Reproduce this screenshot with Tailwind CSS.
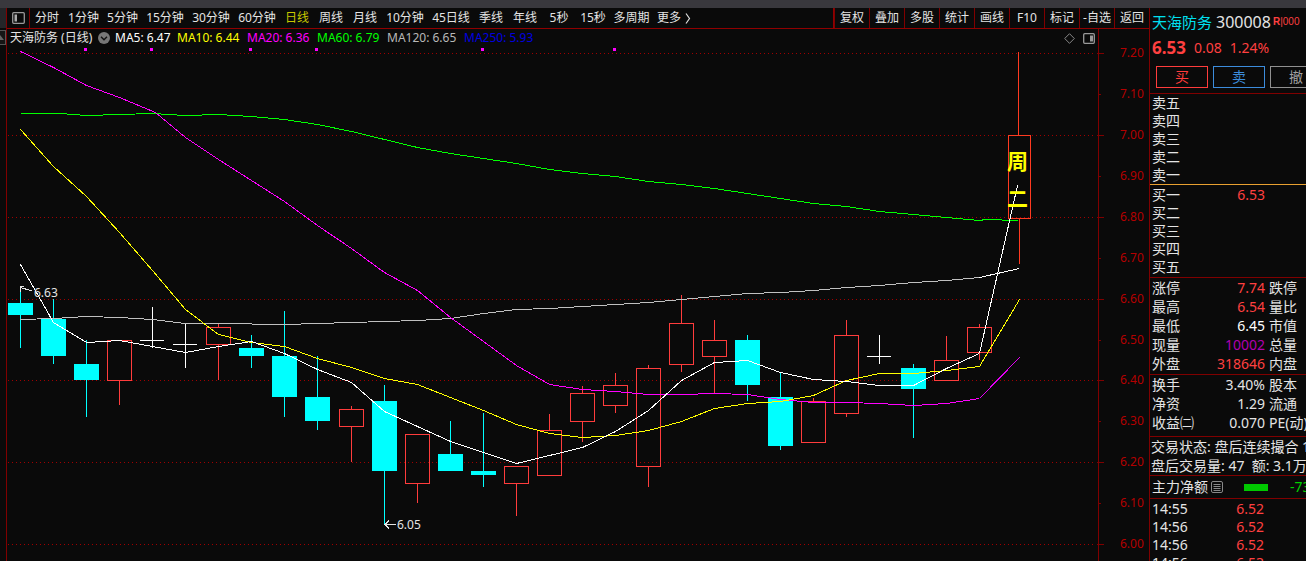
<!DOCTYPE html>
<html lang="zh-CN">
<head>
<meta charset="utf-8">
<title>天海防务 300008</title>
<script src="https://cdn.jsdelivr.net/npm/@tailwindcss/browser@4"></script>
</head>
<body class="flex h-screen flex-col overflow-hidden bg-[#0a0a0a] font-['Noto_Sans','Noto_Sans_CJK_SC',sans-serif] text-xs text-[#e4e4e4]">
<div class="h-2 shrink-0 bg-[#39383d]"></div>
<div class="flex min-h-0 flex-1">

  <!-- collapsed side drawer -->
  <div class="flex w-[6px] shrink-0 flex-col">
    <div class="h-5 bg-[#242528]"></div>
    <button aria-label="展开" class="mt-0.5 flex h-[15px] w-[6px] items-center border-y border-r border-[#555] bg-[#151515]">
      <svg class="h-1.5 w-1" viewBox="0 0 4 6" fill="#666"><path d="M0 0L4 5H0z"/></svg>
    </button>
  </div>

  <main class="flex min-w-0 flex-1 flex-col border-l border-[#800000]">
    <nav class="flex h-[21px] shrink-0 items-stretch border-b border-[#900000] whitespace-nowrap">
      <button aria-label="侧栏" class="flex w-[23px] items-center justify-center border-r border-[#800000]">
        <svg width="13" height="12" viewBox="0 0 13 12"><rect x=".7" y=".7" width="11.6" height="10.6" rx="1" fill="none" stroke="#999" stroke-width="1.3"/><path d="M2.5 2.5H5V9.5H2.5z" fill="#aaa"/></svg>
      </button>
      <button class="w-[34px]">分时</button>
      <button class="w-[39px]">1分钟</button>
      <button class="w-[39px]">5分钟</button>
      <button class="w-[46px]">15分钟</button>
      <button class="w-[46px]">30分钟</button>
      <button class="w-[46px]">60分钟</button>
      <button class="w-[34px] text-[#c8c800]">日线</button>
      <button class="w-[34px]">周线</button>
      <button class="w-[34px]">月线</button>
      <button class="w-[46px]">10分钟</button>
      <button class="w-[46px]">45日线</button>
      <button class="w-[34px]">季线</button>
      <button class="w-[34px]">年线</button>
      <button class="w-[34px]">5秒</button>
      <button class="w-[34px]">15秒</button>
      <button class="w-[43px]">多周期</button>
      <button class="flex items-center gap-1 pl-1">更多
        <svg width="6" height="11" viewBox="0 0 6 11" fill="none" stroke="#ddd" stroke-width="1.2"><path d="M1 .5L4.5 5.5L1 10.5"/></svg>
      </button>
      <div class="ml-auto flex border-l border-[#900000]">
        <button class="w-[35px] border-l border-[#800000]">复权</button>
        <button class="w-[35px] border-l border-[#800000]">叠加</button>
        <button class="w-[35px] border-l border-[#800000]">多股</button>
        <button class="w-[35px] border-l border-[#800000]">统计</button>
        <button class="w-[35px] border-l border-[#800000]">画线</button>
        <button class="w-[35px] border-l border-[#800000]">F10</button>
        <button class="w-[35px] border-l border-[#800000]">标记</button>
        <button class="w-[35px] border-l border-[#800000]">-自选</button>
        <button class="w-[35px] border-l border-[#800000]">返回</button>
      </div>
    </nav>

    <div class="flex h-[18px] shrink-0 whitespace-nowrap">
      <div class="flex flex-1 items-center border-r border-[#800000] pr-[3px] pl-[3px]">
        <span class="w-[88px]">天海防务 (日线)</span>
        <button aria-label="指标菜单" class="w-[17px]">
          <svg width="12" height="12" viewBox="0 0 12 12"><circle cx="6" cy="6" r="6" fill="#777"/><path d="M3 4.8L6 7.8L9 4.8" fill="none" stroke="#111" stroke-width="1.4"/></svg>
        </button>
        <span class="w-[62px] text-white">MA5: 6.47</span>
        <span class="w-[70px] text-[#ffff00]">MA10: 6.44</span>
        <span class="w-[70px] text-[#ff00ff]">MA20: 6.36</span>
        <span class="w-[70px] text-[#00ff00]">MA60: 6.79</span>
        <span class="w-[77px] text-[#b8b8b8]">MA120: 6.65</span>
        <span class="text-[#0000e0]">MA250: 5.93</span>
        <span class="ml-auto flex items-center gap-2">
          <svg width="11" height="11" viewBox="0 0 11 11" fill="none" stroke="#888"><path d="M5.5 .7L10.3 5.5L5.5 10.3L.7 5.5z"/></svg>
          <svg width="12" height="11" viewBox="0 0 12 11"><rect x=".7" y=".7" width="10.6" height="9.6" rx="1" fill="none" stroke="#999" stroke-width="1.3"/><path d="M7 2.5H10V8.5H7z" fill="#999"/></svg>
        </span>
      </div>
      <div class="w-[50px]"></div>
    </div>

    <div class="min-h-0 flex-1">
      <svg id="chart" class="block h-full w-full overflow-visible" viewBox="7 47 1142 514" preserveAspectRatio="xMinYMin meet" role="img" aria-label="日K线图"></svg>
    </div>
  </main>

  <aside class="w-[157px] shrink-0 overflow-hidden border-l border-[#800000] text-sm leading-[18px] whitespace-nowrap">
    <header class="border-b border-[#800000] pb-[5px]">
      <div class="flex h-[27px] items-center pl-0.5">
        <h1 class="mr-1 text-[15px] text-[#00e0f0]">天海防务</h1>
        <span class="text-base">300008</span>
        <span class="ml-0.5 font-['Liberation_Sans',sans-serif] text-[10px] text-[#ff4040]"><b>R</b>|000</span>
      </div>
      <div class="flex h-[25px] items-center gap-2 pl-0.5 text-[#ff4040]">
        <b class="text-[17px]">6.53</b><span>0.08</span><span>1.24%</span>
      </div>
      <div class="mt-1.5 flex gap-[5px] pl-1.5">
        <button class="h-[22px] w-[52px] shrink-0 border border-[#ff3c3c] text-[#ff3c3c]">买</button>
        <button class="h-[22px] w-[52px] shrink-0 border border-[#3c8cdc] text-[#3c8cdc]">卖</button>
        <button class="h-[22px] w-[52px] shrink-0 border border-[#909090] text-[#a0a0a0]">撤</button>
      </div>
    </header>

    <table class="block border-b border-[#e8a030]"><tbody>
      <tr class="h-[18px]"><th class="p-0 pl-0.5 font-normal">卖五</th></tr>
      <tr class="h-[18px]"><th class="p-0 pl-0.5 font-normal">卖四</th></tr>
      <tr class="h-[18px]"><th class="p-0 pl-0.5 font-normal">卖三</th></tr>
      <tr class="h-[18px]"><th class="p-0 pl-0.5 font-normal">卖二</th></tr>
      <tr class="h-[18px]"><th class="p-0 pl-0.5 font-normal">卖一</th></tr>
    </tbody></table>
    <table class="block border-b border-[#800000] py-px"><tbody>
      <tr class="h-[18px]"><th class="w-[46px] p-0 pl-0.5 text-left font-normal">买一</th><td class="w-[69px] p-0 text-right text-[#ff4040]">6.53</td></tr>
      <tr class="h-[18px]"><th class="p-0 pl-0.5 text-left font-normal">买二</th></tr>
      <tr class="h-[18px]"><th class="p-0 pl-0.5 text-left font-normal">买三</th></tr>
      <tr class="h-[18px]"><th class="p-0 pl-0.5 text-left font-normal">买四</th></tr>
      <tr class="h-[18px]"><th class="p-0 pl-0.5 text-left font-normal">买五</th></tr>
    </tbody></table>
    <table class="block border-b border-[#800000] pb-px"><tbody>
      <tr class="h-[19px]"><th class="w-[46px] p-0 pl-0.5 text-left font-normal">涨停</th><td class="w-[69px] p-0 text-right text-[#ff4040]">7.74</td><th class="p-0 pl-1 font-normal">跌停</th></tr>
      <tr class="h-[19px]"><th class="p-0 pl-0.5 text-left font-normal">最高</th><td class="p-0 text-right text-[#ff4040]">6.54</td><th class="p-0 pl-1 font-normal">量比</th></tr>
      <tr class="h-[19px]"><th class="p-0 pl-0.5 text-left font-normal">最低</th><td class="p-0 text-right text-white">6.45</td><th class="p-0 pl-1 font-normal">市值</th></tr>
      <tr class="h-[19px]"><th class="p-0 pl-0.5 text-left font-normal">现量</th><td class="p-0 text-right text-[#b000b0]">10002</td><th class="p-0 pl-1 font-normal">总量</th></tr>
      <tr class="h-[19px]"><th class="p-0 pl-0.5 text-left font-normal">外盘</th><td class="p-0 text-right text-[#ff4040]">318646</td><th class="p-0 pl-1 font-normal">内盘</th></tr>
    </tbody></table>
    <table class="block border-b border-[#800000] pb-1"><tbody>
      <tr class="h-[19px]"><th class="w-[46px] min-w-[46px] p-0 pl-0.5 text-left font-normal">换手</th><td class="w-[69px] min-w-[69px] p-0 text-right">3.40%</td><th class="p-0 pl-1 text-left font-normal">股本</th></tr>
      <tr class="h-[19px]"><th class="p-0 pl-0.5 text-left font-normal">净资</th><td class="p-0 text-right">1.29</td><th class="p-0 pl-1 text-left font-normal">流通</th></tr>
      <tr class="h-[19px]"><th class="p-0 pl-0.5 text-left font-normal">收益㈡</th><td class="p-0 text-right">0.070</td><th class="p-0 pl-1 text-left font-normal">PE(动)</th></tr>
    </tbody></table>
    <div class="border-b border-[#800000] pl-px leading-[19px]">
      <p>交易状态: 盘后连续撮合 15</p>
      <p>盘后交易量: 47 &nbsp;额: 3.1万</p>
    </div>
    <div class="flex h-[23px] items-center border-b border-[#800000] pl-0.5">
      <span>主力净额</span>
      <svg class="ml-[3px] shrink-0" width="12" height="12" viewBox="0 0 12 12" fill="none" stroke="#888"><rect x=".5" y=".5" width="11" height="11" rx="1.5"/><path d="M2.5 3.5H9.5M2.5 5.5H9.5M2.5 7.5H9.5M2.5 9.5H9.5"/></svg>
      <span class="ml-[21px] h-[7px] w-6 shrink-0 bg-[#00c800]"></span>
      <span class="ml-[22px] text-[#00d000]">-73</span>
    </div>
    <table class="block pt-px"><tbody>
      <tr class="h-[18px]"><td class="w-[46px] p-0 pl-0.5">14:55</td><td class="w-[68px] p-0 text-right text-[#ff4040]">6.52</td></tr>
      <tr class="h-[18px]"><td class="p-0 pl-0.5">14:56</td><td class="p-0 text-right text-[#ff4040]">6.52</td></tr>
      <tr class="h-[18px]"><td class="p-0 pl-0.5">14:56</td><td class="p-0 text-right text-[#ff4040]">6.52</td></tr>
      <tr class="h-[18px]"><td class="p-0 pl-0.5">14:56</td><td class="p-0 text-right text-[#ff4040]">6.53</td></tr>
    </tbody></table>
  </aside>
</div>

<script>
const svg = document.getElementById('chart');
let out = '';
const line = (x1, y1, x2, y2, c, extra = '') => { out += `<line x1="${x1}" y1="${y1}" x2="${x2}" y2="${y2}" stroke="${c}" ${extra}/>`; };
const text = (x, y, s, c, size = 12, extra = '') => { out += `<text x="${x}" y="${y}" fill="${c}" font-size="${size}" ${extra}>${s}</text>`; };

// price axis and grid
out += '<g shape-rendering="crispEdges">';
line(1098.5, 47, 1098.5, 561, '#800000');
const axis = [['7.20',53],['7.10',94],['7.00',135],['6.90',176],['6.80',217],['6.70',258],['6.60',299],['6.50',340],['6.40',380],['6.30',421],['6.20',462],['6.10',503],['6.00',544]];
axis.forEach(([, y], i) => {
  if (i % 2 === 0) {
    line(8, y + .5, 1096, y + .5, '#a00000', 'stroke-dasharray="1 3"');
    line(1097, y + .5, 1104, y + .5, '#800000');
  } else line(1099, y + .5, 1101, y + .5, '#800000');
});
[84, 150, 249, 315, 481, 613].forEach(x => { out += `<rect x="${x}" y="48" width="3" height="3" fill="#ff00ff"/>`; });

// candles: kind, centre x, high, body top, body bottom, low
const C = '#00ffff', R = '#ff3c3c', W = '#ffffff';
[
 ['d',20,288,303,315,348],['d',53,299,319,356,364],['d',86,340,364,380,417],['u',119,340,340,381,405],
 ['x',152,307,340,340,348],['x',185,323,344,344,368],['u',218,324,327,345,380],['d',251,335,348,356,368],
 ['d',284,311,356,397,417],['d',317,356,397,421,430],['u',351,406,409,427,462],['d',384,385,401,471,525],
 ['u',417,434,434,484,503],['d',450,421,454,471,471],['d',483,413,471,475,487],['u',516,466,466,484,516],
 ['u',549,414,430,476,476],['u',582,386,393,422,442],['u',615,373,385,406,413],['u',648,365,368,467,487],
 ['u',681,295,323,365,372],['u',714,320,340,357,393],['d',747,335,340,385,401],['d',780,373,397,446,450],
 ['u',813,398,401,443,443],['u',846,320,335,414,417],['x',879,335,356,356,364],['d',913,364,368,389,438],
 ['u',946,336,360,381,381],['u',979,324,327,353,360]
].forEach(([k, x, h, t, b, l]) => {
  const cx = x + .5;
  if (k === 'd') {
    line(cx, h, cx, l, C);
    out += `<rect x="${x - 12}" y="${t}" width="25" height="${b - t}" fill="${C}"/>`;
  } else if (k === 'u') {
    if (t > h) line(cx, h, cx, t, R);
    if (l > b) line(cx, b, cx, l, R);
    out += `<rect x="${x - 11.5}" y="${t + .5}" width="24" height="${b - t - 1}" fill="none" stroke="${R}"/>`;
  } else {
    line(cx, h, cx, l, W);
    line(x - 12, t + .5, x + 12, t + .5, W);
  }
});
line(1018.5, 52, 1018.5, 135, '#ff3a20');
line(1019.5, 219, 1019.5, 264, '#ff3a20');
out += '<rect x="1008.5" y="135.5" width="22" height="83" fill="none" stroke="#ff3a20"/>';

// moving averages
const ma = (c, pts) => { out += `<polyline points="${pts}" fill="none" stroke="${c}" transform="translate(.5 .5)"/>`; };
ma('#c0c0c0', '20,319 53,318 86,316 119,317 152,319 185,323 218,323 284,324 317,323 351,322 384,321 417,320 450,318 483,313 516,309 549,308 582,306 615,304 648,302 681,299 714,296 747,293 780,292 813,290 846,287 879,285 913,282 946,280 979,277');
ma('#ffffff', '979,277 1019,268');
ma('#00ff00', '20,113 60,113 86,115 119,114 152,113 185,115 218,114 251,116 284,119 317,124 351,131 384,139 417,147 450,153 483,158 516,163 549,169 582,173 615,176 648,181 681,184 714,188 747,193 780,198 813,203 846,206 879,211 913,214 946,217 979,220 985,219 1018,220');
ma('#ff00ff', '20,51 53,67 86,85 119,97 155,112 185,137 218,159 251,180 284,201 317,225 351,248 384,272 417,290 450,317 483,341 516,365 549,384 582,389 615,391 648,394 681,394 714,393 747,394 780,399 813,402 846,402 879,403 913,405 946,403 979,398');
ma('#e000f0', '979,398 1019,357');
ma('#ffff00', '20,129 53,166 86,196 119,232 152,270 185,309 218,334 251,342 284,346 317,358 351,367 384,378 417,384 450,397 483,410 516,424 549,433 582,437 615,435 648,430 681,421 714,408 747,403 780,401 813,395 846,380 879,373 913,373 946,370 979,366 1019,299');
ma('#ffffff', '20,264 53,322 86,342 119,340 152,346 185,352 218,346 251,341 284,353 317,369 351,382 384,411 417,426 450,441 483,452 516,463 549,455 582,447 615,431 648,410 681,380 714,362 747,360 780,372 813,379 846,381 879,385 913,385 946,368 979,353 1017,185');
out += '<path d="M20.5 287.5L32 291M20.5 292V286.5H24M385 524.5H396M389 520.5L385 524.5L389 528.5" fill="none" stroke="#e4e4e4"/>';
out += '</g>';

axis.forEach(([s, y]) => text(1120, y + 4, s, '#b40000'));
text(34, 297, '6.63', '#e4e4e4');
text(397, 529, '6.05', '#e4e4e4');
text(1007, 169, '周', '#ffff00', 21, 'font-weight="700"');
text(1007, 206, '二', '#ffff00', 21, 'font-weight="700"');
svg.innerHTML = out;
</script>
</body>
</html>
